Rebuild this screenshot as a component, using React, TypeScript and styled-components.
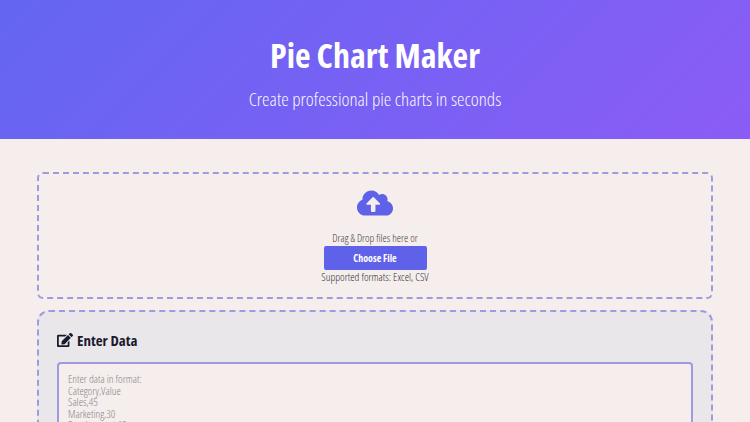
import React from 'react';
import styled, {createGlobalStyle} from "styled-components";
import {FaCloudUploadAlt, FaEdit} from "react-icons/fa";

const GlobalStyle = createGlobalStyle`
  html, body {
    margin: 0;
    height: 100%;
    overflow: hidden;
    background: #f5eeec;
    font-family: "Open Sans", "Noto Sans", "Liberation Sans", sans-serif;
    font-stretch: 75%;
  }
`;

function App() {
  return (
      <>
        <GlobalStyle/>
        <Header>
          <Title>Pie Chart Maker</Title>
          <Subtitle>Create professional pie charts in seconds</Subtitle>
        </Header>

        <Main>
          <DropZone>
            <CloudIcon/>
            <DropText>Drag &amp; Drop files here or</DropText>
            <ChooseButton type="button">Choose File</ChooseButton>
            <Formats>Supported formats: Excel, CSV</Formats>
          </DropZone>

          <DataPanel>
            <PanelTitle>
              <FaEdit/>
              Enter Data
            </PanelTitle>
            <DataInput
                readOnly
                placeholder={"Enter data in format:\nCategory,Value\nSales,45\nMarketing,30\nDevelopment,15"}
            />
          </DataPanel>
        </Main>
      </>
  );
}

const Header = styled.header`
  height: 139px;
  box-sizing: border-box;
  padding-top: 35px;
  text-align: center;
  color: #fff;
  background: linear-gradient(135deg, #6366f1, #8b5cf6);
`;

const Title = styled.h1`
  margin: 0;
  font-size: 34px;
  line-height: 40px;
  font-weight: 700;
`;

const Subtitle = styled.p`
  margin: 14px 0 0;
  font-size: 19px;
  line-height: 20px;
  font-weight: 300;
  opacity: .95;
`;

const Main = styled.main`
  display: flex;
  flex-direction: column;
  gap: 11px;
  padding: 33px 37px 0;
`;

const DropZone = styled.section`
  height: 127px;
  box-sizing: border-box;
  padding-top: 13px;
  display: flex;
  flex-direction: column;
  align-items: center;
  border: 2px dashed #a09ade;
  border-radius: 6px;
`;

const CloudIcon = styled(FaCloudUploadAlt)`
  width: 36px;
  height: 32px;
  color: #5f62e8;
`;

const DropText = styled.p`
  margin: 12px 0 0;
  font-size: 10.7px;
  line-height: 14px;
  font-weight: 300;
  color: #3c3c46;
`;

const ChooseButton = styled.button`
  width: 103px;
  height: 24px;
  margin-top: 1px;
  padding: 0;
  border: 0;
  border-radius: 2px;
  background: #5f62e8;
  color: #fff;
  font-family: inherit;
  font-stretch: inherit;
  font-size: 10px;
  font-weight: 700;
`;

const Formats = styled.p`
  margin: 0;
  font-size: 11px;
  line-height: 14px;
  font-weight: 300;
  color: #2e2e38;
`;

const DataPanel = styled.section`
  box-sizing: border-box;
  height: 200px;
  padding: 18px 18px;
  border: 2px dashed #a09ade;
  border-radius: 12px;
  background: #eae7ea;
`;

const PanelTitle = styled.h2`
  display: flex;
  align-items: center;
  gap: 4px;
  margin: 0 0 12px;
  height: 20px;
  font-size: 15px;
  font-weight: 700;
  color: #1a1a2e;

  svg {
    width: 16px;
    height: 16px;
  }
`;

const DataInput = styled.textarea`
  display: block;
  width: 100%;
  height: 150px;
  box-sizing: border-box;
  padding: 9px;
  border: 2px solid #a09ade;
  border-radius: 4px;
  background: #f5eeec;
  font-family: inherit;
  font-stretch: inherit;
  font-size: 11px;
  font-weight: 300;
  line-height: 11.6px;
  resize: none;
  outline: none;

  &::placeholder {
    color: #85858b;
    opacity: 1;
  }
`;

export default App;
